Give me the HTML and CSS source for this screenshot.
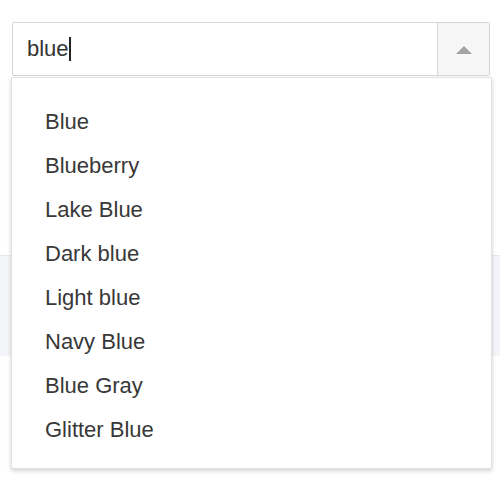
FILE: index.html
```html
<!DOCTYPE html>
<html lang="en">
<head>
    <meta charset="UTF-8">
    <meta name="viewport" content="width=device-width, initial-scale=1.0">
    <title>Color Picker</title>
    <link rel="stylesheet" href="styles.css">
</head>
<body>
    <div class="combo">
        <div class="combo-field">
            <div class="combo-input">blue<span class="caret"></span></div>
            <button class="combo-toggle" aria-label="Close">
                <svg width="18" height="9" viewBox="0 0 18 9"><path d="M1 9 L9 1 L17 9 Z" fill="#a3a3a3"/></svg>
            </button>
        </div>
        <ul class="combo-menu">
            <li>Blue</li>
            <li>Blueberry</li>
            <li>Lake Blue</li>
            <li>Dark blue</li>
            <li>Light blue</li>
            <li>Navy Blue</li>
            <li>Blue Gray</li>
            <li>Glitter Blue</li>
        </ul>
    </div>
    <div class="band"></div>
</body>
</html>
```

FILE: styles.css
```css
html, body {
    height: 100%;
}
body {
    margin: 0;
    padding: 22px 10px 0 12px;
    box-sizing: border-box;
    min-height: 478px;
    font-family: "Liberation Sans", Arial, sans-serif;
    background-color: #fff;
    color: #333;
}
.combo {
    position: relative;
    z-index: 2;
}
.combo-field {
    display: flex;
    height: 54px;
    box-sizing: border-box;
    border: 1px solid #d6d6d6;
    border-radius: 2px;
}
.combo-input {
    flex: 1;
    display: flex;
    align-items: center;
    padding-left: 14px;
    font-size: 22px;
    color: #333;
}
.caret {
    display: inline-block;
    width: 2px;
    height: 24px;
    background-color: #222;
    margin-left: 0;
}
.combo-toggle {
    width: 52px;
    border: none;
    border-left: 1px solid #d6d6d6;
    background-color: #f6f6f7;
    display: flex;
    align-items: center;
    justify-content: center;
    padding: 0;
}
.combo-menu {
    position: absolute;
    top: 55px;
    left: -1px;
    right: -2px;
    margin: 0;
    padding: 22px 0 16px;
    list-style: none;
    background-color: #fff;
    border: 1px solid #e2e2e2;
    border-radius: 2px;
    box-shadow: 0 2px 4px rgba(0, 0, 0, 0.18);
}
.combo-menu li {
    padding-left: 33px;
    line-height: 44px;
    font-size: 22px;
    color: #383838;
}
.band {
    margin: 179px -10px 0 -12px;
    height: 100px;
    background-color: #f3f5f8;
    border-top: 1px solid #e6e8ec;
}
```
